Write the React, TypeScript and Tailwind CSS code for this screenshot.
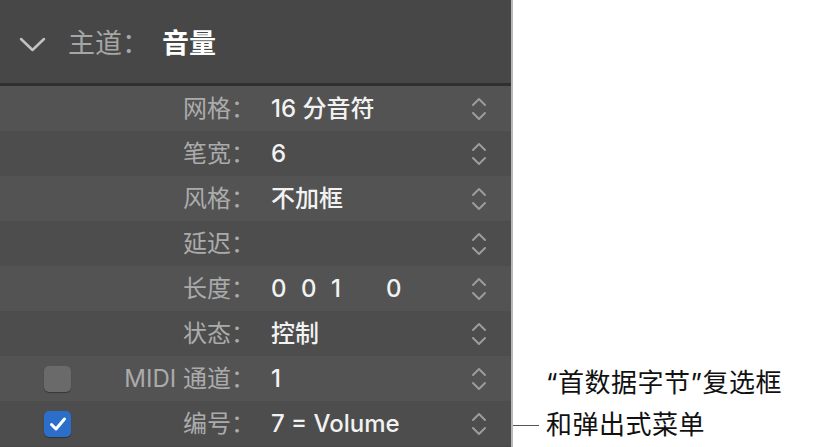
const FONT = "font-['Inter','Noto_Sans_CJK_SC',sans-serif]";

type Row = {
  label: string;
  value?: React.ReactNode;
  checkbox?: "on" | "off";
};

const rows: Row[] = [
  { label: "网格：", value: "16 分音符" },
  { label: "笔宽：", value: "6" },
  { label: "风格：", value: "不加框" },
  { label: "延迟：" },
  {
    label: "长度：",
    value: (
      <span className="flex">
        <span className="w-[30px]">0</span>
        <span className="w-[30px]">0</span>
        <span className="w-[55px]">1</span>
        <span>0</span>
      </span>
    ),
  },
  { label: "状态：", value: "控制" },
  { label: "MIDI 通道：", value: "1", checkbox: "off" },
  { label: "编号：", value: "7 = Volume", checkbox: "on" },
];

function Stepper() {
  return (
    <svg width="16" height="26" viewBox="0 0 16 26" fill="none" stroke="#9c9c9c" strokeWidth="2" strokeLinecap="round" strokeLinejoin="round">
      <path d="M2 9 L8 3 L14 9" />
      <path d="M2 17 L8 23 L14 17" />
    </svg>
  );
}

function Checkbox({ checked }: { checked: boolean }) {
  if (checked) {
    return (
      <div className="w-[27px] h-[26px] rounded-[5px] bg-[#2c6fcb] flex items-center justify-center shadow-[0_1px_1px_rgba(0,0,0,0.35)]">
        <svg width="18" height="16" viewBox="0 0 18 16" fill="none" stroke="white" strokeWidth="3" strokeLinecap="round" strokeLinejoin="round">
          <path d="M2.5 8.5 L7 13 L15.5 3" />
        </svg>
      </div>
    );
  }
  return <div className="w-[27px] h-[26px] rounded-[5px] bg-[#6a6a6a] shadow-[0_1px_1px_rgba(0,0,0,0.35)]" />;
}

function PropertyRow({ row, index }: { row: Row; index: number }) {
  return (
    <div className={`flex items-center h-[45px] ${index % 2 === 0 ? "bg-[#535353]" : "bg-[#4d4d4d]"}`}>
      <div className="w-[44px]" />
      <div className="w-[28px]">
        {row.checkbox && <Checkbox checked={row.checkbox === "on"} />}
      </div>
      <div className="w-[183px] text-right text-[24px] text-[#ababab] whitespace-nowrap">{row.label}</div>
      <div className="ml-[16px] flex-1 text-[24px] font-medium text-[#f2f2f2] whitespace-nowrap">{row.value}</div>
      <div className="mr-[24px]">
        <Stepper />
      </div>
    </div>
  );
}

export default function App() {
  return (
    <div className={`w-[814px] h-[447px] bg-white flex overflow-hidden ${FONT}`}>
      <div className="w-[513px] h-full flex flex-col bg-[#474747] border-r-2 border-[#b9b9b9]">
        <div className="h-[86px] pt-[6px] flex items-center border-b-[3px] border-[#303030]">
          <svg className="ml-[19px]" width="27" height="15" viewBox="0 0 27 15" fill="none" stroke="#c2c2c2" strokeWidth="2.5" strokeLinecap="round" strokeLinejoin="round">
            <path d="M2 2 L13.5 13 L25 2" />
          </svg>
          <span className="ml-[22px] text-[27px] text-[#a6a6a6]">主道：</span>
          <span className="ml-[13px] text-[27px] font-semibold text-white">音量</span>
        </div>
        <div className="flex flex-col">
          {rows.map((row, i) => (
            <PropertyRow key={row.label} row={row} index={i} />
          ))}
        </div>
      </div>
      <div className="flex-1 flex flex-col pt-[362px]">
        <div className="flex">
          <div className="w-[33px]" />
          <div className="text-[26px] leading-[42px] tracking-[0.5px] text-[#111] whitespace-nowrap">“首数据字节”复选框</div>
        </div>
        <div className="flex items-center">
          <div className="w-[26px] h-px bg-[#555]" />
          <div className="ml-[7px] text-[26px] leading-[42px] tracking-[0.5px] text-[#111] whitespace-nowrap">和弹出式菜单</div>
        </div>
      </div>
    </div>
  );
}
